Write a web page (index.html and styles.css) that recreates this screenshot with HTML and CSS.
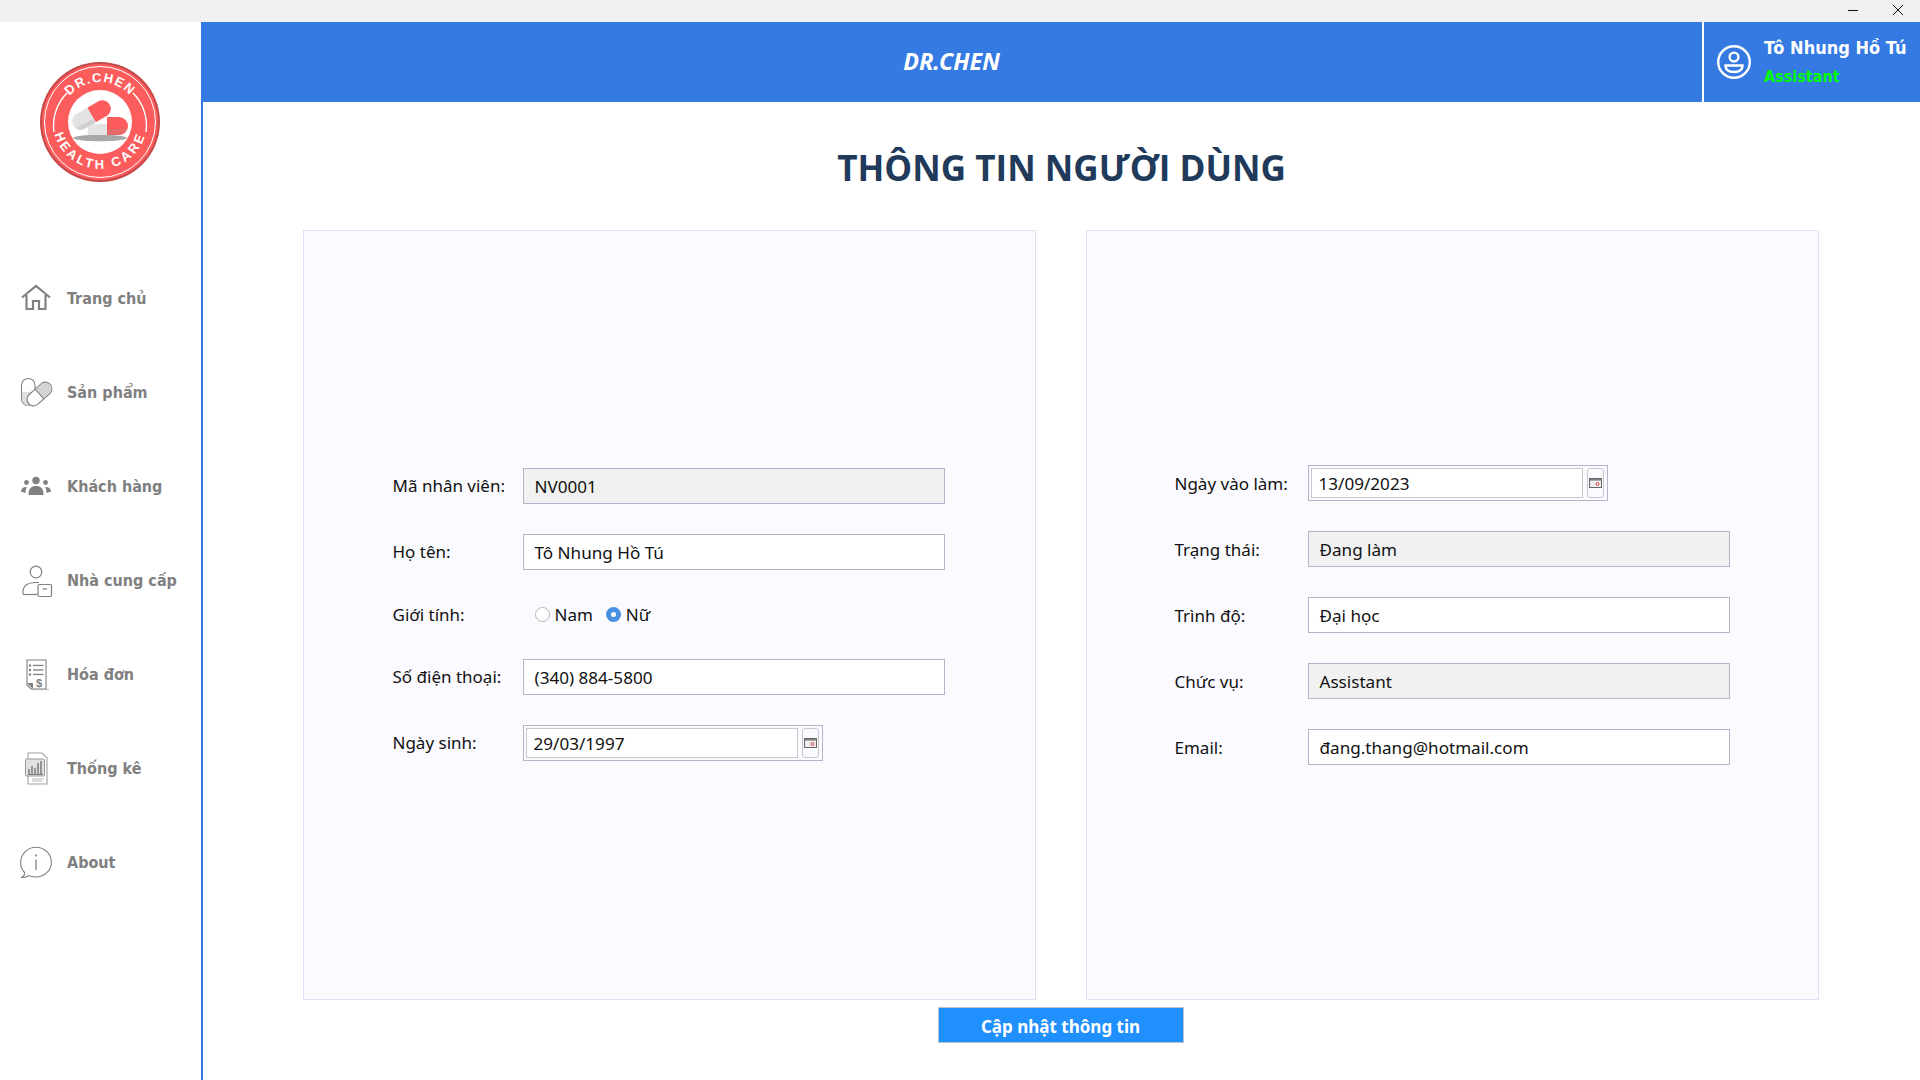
FILE: index.html
```html
<!DOCTYPE html>
<html lang="vi">
<head>
  <meta charset="UTF-8">
  <title>Thông tin người dùng</title>
  <link rel="stylesheet" href="styles.css">
</head>
<body>
  <div class="titlebar">
    <span class="win-btn win-min"></span>
    <svg class="win-close" width="12" height="12" viewBox="0 0 12 12"><path d="M1 1 L11 11 M11 1 L1 11" stroke="#111" stroke-width="1" fill="none"/></svg>
  </div>

  <div class="app">
    <aside class="sidebar">
      <svg class="logo" width="120" height="120" viewBox="0 0 120 120">
        <defs>
          <path id="arcTop" d="M20 60 A40 40 0 0 1 100 60"/>
          <path id="arcBottom" d="M13 60 A47 47 0 0 0 107 60"/>
        </defs>
        <circle cx="60" cy="60" r="60" fill="#c54848"/>
        <circle cx="60" cy="60" r="58" fill="#fd5c5c"/>
        <circle cx="60" cy="60" r="55.5" fill="none" stroke="#fff" stroke-width="1"/>
        <path d="M27 31 A46 46 0 0 0 14 70" fill="none" stroke="#fff" stroke-width="1.4"/>
        <path d="M93 31 A46 46 0 0 1 106 70" fill="none" stroke="#fff" stroke-width="1.4"/>
        <circle cx="60" cy="60" r="32" fill="#fff"/>
        <text class="logo-text logo-top"><textPath href="#arcTop" startOffset="50%" text-anchor="middle">DR.CHEN</textPath></text>
        <text class="logo-text logo-bottom"><textPath href="#arcBottom" startOffset="50%" text-anchor="middle">HEALTH CARE</textPath></text>
        <ellipse cx="60" cy="76" rx="27" ry="3.2" fill="#a8a8a8"/>
        <path d="M48 62 H67 V73 H48 Z" fill="#e4e4e4"/>
        <path d="M67 55 H79 A9 9 0 0 1 79 73 H67 Z" fill="#fd5c5c"/>
        <path d="M67 67 H87 A9 9 0 0 1 79 73 H67 Z" fill="#e56b6b"/>
        <g transform="rotate(-30 51.5 53)">
          <path d="M51.5 44.5 H64 A8.5 8.5 0 0 1 64 61.5 H51.5 Z" fill="#fd5c5c"/>
          <path d="M51.5 44.5 H39 A8.5 8.5 0 0 0 39 61.5 H51.5 Z" fill="#e2e2e2"/>
          <path d="M31 56 A8.5 8.5 0 0 0 39 61.5 H51.5 V57 H38 Z" fill="#cfcfcf"/>
        </g>
      </svg>

      <nav class="nav">
        <a class="nav-item">
          <svg class="nav-icon" width="36" height="36" viewBox="0 0 36 36"><path d="M4 17.5 L18 6 L32 17.5 M8.5 15 V29 H15 V21 H21 V29 H27.5 V15" fill="none" stroke="#808080" stroke-width="2.2"/></svg>
          <span class="nav-label">Trang chủ</span>
        </a>
        <a class="nav-item">
          <svg class="nav-icon" width="36" height="36" viewBox="0 0 36 36">
            <rect x="3.5" y="4.5" width="13.5" height="27" rx="6.7" fill="#fff" stroke="#808080" stroke-width="1.1"/>
            <path d="M4 18 H17 V25 A6.5 6.5 0 0 1 4 25 Z" fill="#dedede"/>
            <g transform="rotate(-42 21.5 20)">
              <rect x="7" y="13.5" width="29" height="13" rx="6.5" fill="#fff" stroke="#808080" stroke-width="1.1"/>
              <path d="M21.5 14 H29.5 A6 6 0 0 1 29.5 26 H21.5 Z" fill="#d4d4d4"/>
              <path d="M21.5 13.5 V26.5" stroke="#808080" stroke-width="1.1"/>
            </g>
          </svg>
          <span class="nav-label">Sản phẩm</span>
        </a>
        <a class="nav-item">
          <svg class="nav-icon" width="36" height="36" viewBox="0 0 36 36" fill="#808080">
            <circle cx="18" cy="12.5" r="3.7"/>
            <path d="M10.5 27 C10.5 20 13.5 18 18 18 C22.5 18 25.5 20 25.5 27 Z"/>
            <circle cx="8.5" cy="14.5" r="2.4"/>
            <circle cx="27.5" cy="14.5" r="2.4"/>
            <path d="M3 23.5 C3.5 20 5.5 19 8.5 19 C8.8 19 8.9 19.4 8.7 19.7 C7.8 21 7.5 22.3 7.5 25 Z"/>
            <path d="M33 23.5 C32.5 20 30.5 19 27.5 19 C27.2 19 27.1 19.4 27.3 19.7 C28.2 21 28.5 22.3 28.5 25 Z"/>
          </svg>
          <span class="nav-label">Khách hàng</span>
        </a>
        <a class="nav-item">
          <svg class="nav-icon" width="36" height="36" viewBox="0 0 36 36" fill="none" stroke="#808080" stroke-width="1.2">
            <circle cx="18" cy="10" r="5.8"/>
            <path d="M5 32 V30 C5 23.5 10 20.5 18 20.5 H21"/>
            <path d="M5 32.5 H19"/>
            <rect x="20" y="22.5" width="13.5" height="12" rx="1.5"/>
            <path d="M24.5 27 H29"/>
          </svg>
          <span class="nav-label">Nhà cung cấp</span>
        </a>
        <a class="nav-item">
          <svg class="nav-icon" width="36" height="36" viewBox="0 0 36 36">
            <path d="M9 4 H28 V33 H13 L9 29 Z" fill="#fff" stroke="#808080" stroke-width="1.1"/>
            <path d="M9 27 L15 33 V27 Z" fill="#808080"/>
            <path d="M13 33.6 H31" stroke="#b0b0b0"/>
            <g fill="#808080">
              <circle cx="12" cy="9.5" r="1.2"/><circle cx="12" cy="14" r="1.2"/><circle cx="12" cy="18.5" r="1.2"/>
              <rect x="15" y="8.8" width="10.5" height="1.3"/><rect x="15" y="13.3" width="10.5" height="1.3"/><rect x="15" y="17.8" width="10.5" height="1.3"/>
            </g>
            <text class="icon-dollar" x="18" y="31">$</text>
          </svg>
          <span class="nav-label">Hóa đơn</span>
        </a>
        <a class="nav-item">
          <svg class="nav-icon" width="36" height="36" viewBox="0 0 36 36">
            <path d="M10 3 H24 L29 8 V34 H10 Z" fill="#fff" stroke="#a0a0a0" stroke-width="1.1"/>
            <rect x="7.5" y="9" width="19" height="17" rx="1" fill="#e2e2e2" stroke="#9a9a9a"/>
            <path d="M11 24 V19 M14 24 V16 M17 24 V18 M20 24 V13 M23 24 V11" stroke="#808080" stroke-width="1.6"/>
            <path d="M10 24.5 H25" stroke="#808080"/>
            <path d="M14 29 H26 M14 31 H24" stroke="#b5b5b5"/>
          </svg>
          <span class="nav-label">Thống kê</span>
        </a>
        <a class="nav-item">
          <svg class="nav-icon" width="36" height="36" viewBox="0 0 36 36">
            <path d="M3.5 33.5 C6 32 7 30.5 6.6 28.5 C4 26 2.6 22.5 2.6 18.5 C2.6 10.5 9.5 3.2 18 3.2 C26.5 3.2 33.4 10 33.4 18.2 C33.4 26.5 26.5 33 18 33 C14.5 33 12.5 32 10.5 31.8 C8.5 33 6 33.8 3.5 33.5 Z" fill="none" stroke="#808080" stroke-width="1.1"/>
            <path d="M18 15.5 V26" stroke="#808080" stroke-width="1.3"/>
            <circle cx="18" cy="11.5" r="1" fill="#808080"/>
          </svg>
          <span class="nav-label">About</span>
        </a>
      </nav>
    </aside>

    <div class="content">
      <header class="topbar">
        <div class="brand">DR.CHEN</div>
        <div class="user">
          <svg class="user-icon" width="36" height="36" viewBox="0 0 36 36" fill="none" stroke="#fff" stroke-width="2.4">
            <circle cx="18" cy="18" r="15.8"/>
            <circle cx="18" cy="13" r="4.4"/>
            <path d="M9.5 21.5 H26.5 C26.5 26 23 28 18 28 C13 28 9.5 26 9.5 21.5 Z"/>
          </svg>
          <div class="user-text">
            <div class="user-name">Tô Nhung Hồ Tú</div>
            <div class="user-role">Assistant</div>
          </div>
        </div>
      </header>

      <main class="main">
        <h1 class="page-title">THÔNG TIN NGƯỜI DÙNG</h1>

        <div class="panels">
          <section class="panel panel-left">
            <div class="row">
              <label class="lbl">Mã nhân viên:</label>
              <div class="field disabled">NV0001</div>
            </div>
            <div class="row">
              <label class="lbl">Họ tên:</label>
              <div class="field">Tô Nhung Hồ Tú</div>
            </div>
            <div class="row row-radio">
              <label class="lbl">Giới tính:</label>
              <div class="radios">
                <span class="radio"></span><span class="radio-text">Nam</span>
                <span class="radio checked"></span><span class="radio-text">Nữ</span>
              </div>
            </div>
            <div class="row">
              <label class="lbl">Số điện thoại:</label>
              <div class="field">(340) 884-5800</div>
            </div>
            <div class="row">
              <label class="lbl">Ngày sinh:</label>
              <div class="date">
                <div class="date-input">29/03/1997</div>
                <div class="date-btn">
                  <svg width="13" height="10" viewBox="0 0 13 10"><rect x=".5" y=".5" width="12" height="9" fill="#eee" stroke="#666"/><rect x="1" y="1" width="11" height="1.6" fill="#8a7f7f"/><circle cx="8.5" cy="6" r="1.5" fill="none" stroke="#e0403f"/></svg>
                </div>
              </div>
            </div>
          </section>

          <section class="panel panel-right">
            <div class="row">
              <label class="lbl">Ngày vào làm:</label>
              <div class="date">
                <div class="date-input">13/09/2023</div>
                <div class="date-btn">
                  <svg width="13" height="10" viewBox="0 0 13 10"><rect x=".5" y=".5" width="12" height="9" fill="#eee" stroke="#666"/><rect x="1" y="1" width="11" height="1.6" fill="#8a7f7f"/><circle cx="8.5" cy="6" r="1.5" fill="none" stroke="#e0403f"/></svg>
                </div>
              </div>
            </div>
            <div class="row">
              <label class="lbl">Trạng thái:</label>
              <div class="field disabled">Đang làm</div>
            </div>
            <div class="row">
              <label class="lbl">Trình độ:</label>
              <div class="field">Đại học</div>
            </div>
            <div class="row">
              <label class="lbl">Chức vụ:</label>
              <div class="field disabled">Assistant</div>
            </div>
            <div class="row">
              <label class="lbl">Email:</label>
              <div class="field">đang.thang@hotmail.com</div>
            </div>
          </section>
        </div>

        <button class="btn-update" type="button">Cập nhật thông tin</button>
      </main>
    </div>
  </div>
</body>
</html>
```

FILE: styles.css
```css
html, body {
  margin: 0;
  height: 100%;
  overflow: hidden;
  background: #fff;
  font-family: "Noto Sans", "Open Sans", sans-serif;
}

/* thanh cua so */
.titlebar {
  height: 22px;
  background: #f0f0f0;
  display: flex;
  align-items: center;
  justify-content: flex-end;
}

.win-btn.win-min {
  width: 10px;
  height: 1px;
  background: #111;
  margin-right: 34px;
  margin-top: -2px;
}

.win-close {
  margin-right: 16px;
  margin-top: -2px;
}

.app {
  display: flex;
  height: 1058px;
}

/* sidebar */
.sidebar {
  width: 201px;
  flex: none;
  background: #fff;
  border-right: 2px solid #357ae3;
  display: flex;
  flex-direction: column;
  align-items: flex-start;
}

.logo {
  margin: 40px 0 0 40px;
}

.logo-text {
  font-family: "Liberation Sans", sans-serif;
  font-weight: 700;
  font-size: 13px;
  fill: #fff;
}

.logo-top {
  letter-spacing: 1.4px;
}

.logo-bottom {
  letter-spacing: 2.8px;
}

.nav {
  margin-top: 69px;
  display: flex;
  flex-direction: column;
  width: 100%;
}

.nav-item {
  height: 94px;
  display: flex;
  align-items: center;
  padding-left: 18px;
  gap: 13px;
  color: #808080;
  font-family: "DejaVu Sans", sans-serif;
  font-stretch: condensed;
  font-weight: 700;
  font-size: 16px;
}

.nav-label {
  padding-top: 1px;
}

.icon-dollar {
  font-family: "Liberation Sans", sans-serif;
  font-weight: 700;
  font-size: 11px;
  fill: #808080;
}

/* header */
.content {
  flex: 1;
  display: flex;
  flex-direction: column;
  min-width: 0;
}

.topbar {
  height: 80px;
  margin-left: -2px;
  background: #357ae3;
  display: flex;
  color: #fff;
}

.brand {
  flex: 1;
  display: flex;
  align-items: center;
  justify-content: center;
  padding-bottom: 2px;
  font-style: italic;
  font-weight: 700;
  font-size: 23.3px;
}

.user {
  width: 218px;
  border-left: 2px solid #fff;
  display: flex;
  align-items: center;
  box-sizing: border-box;
  padding-left: 12px;
  gap: 12px;
}

.user-text {
  display: flex;
  flex-direction: column;
  gap: 7px;
  font-family: "DejaVu Sans", sans-serif;
  font-stretch: condensed;
  font-weight: 700;
}

.user-name {
  font-size: 18px;
  line-height: 22px;
}

.user-role {
  font-size: 16px;
  line-height: 22px;
  color: #00ff00;
}

/* noi dung */
.main {
  flex: 1;
  display: flex;
  flex-direction: column;
  align-items: center;
}

.page-title {
  margin: 0;
  height: 128px;
  box-sizing: border-box;
  padding-top: 36px;
  font-family: "Open Sans", sans-serif;
  font-size: 35.1px;
  line-height: 58px;
  font-weight: 700;
  color: #1f3a5a;
}

.panels {
  display: flex;
  gap: 50px;
  margin-left: -2px;
}

.panel {
  width: 733px;
  height: 770px;
  box-sizing: border-box;
  background: #fafaff;
  border: 1px solid #e0dff5;
  display: flex;
  flex-direction: column;
  justify-content: center;
  gap: 30px;
}

.panel-left {
  padding-left: 89px;
  padding-bottom: 2px;
}

.panel-right {
  padding-left: 88px;
}

.row {
  display: flex;
  align-items: center;
  min-height: 36px;
}

.row-radio {
  min-height: 29px;
}

.lbl {
  width: 130px;
  flex: none;
  font-size: 17px;
  color: #111;
}

.panel-right .lbl {
  width: 133px;
}

.field {
  width: 422px;
  height: 36px;
  box-sizing: border-box;
  border: 1px solid #b4b4cc;
  background: #fff;
  padding: 1px 11px 0;
  display: flex;
  align-items: center;
  font-size: 17.1px;
  color: #111;
}

.field.disabled {
  background: #f1f1f1;
}

.date {
  width: 300px;
  height: 36px;
  box-sizing: border-box;
  border: 1px solid #b4b4cc;
  padding: 2px 3px 2px 2px;
  display: flex;
  gap: 4px;
}

.date-input {
  flex: 1;
  box-sizing: border-box;
  border: 1px solid #c8c8d2;
  background: #fff;
  padding: 1px 7px 0;
  display: flex;
  align-items: center;
  font-size: 17.1px;
  color: #111;
}

.date-btn {
  width: 17px;
  box-sizing: border-box;
  border: 1px solid #c8c8d2;
  border-radius: 3px;
  background: #fafaff;
  display: flex;
  align-items: center;
  justify-content: center;
}

.radios {
  display: flex;
  align-items: center;
  padding-left: 12px;
  font-size: 17px;
  color: #111;
}

.radio {
  width: 15px;
  height: 15px;
  box-sizing: border-box;
  border: 1px solid #b5b5b5;
  border-radius: 50%;
  background: #fff;
  margin-right: 5px;
}

.radio.checked {
  border: 5px solid #4a90e2;
}

.radio-text {
  margin-right: 13px;
}

.btn-update {
  width: 246px;
  height: 36px;
  margin: 7px 0 0 -2px;
  box-sizing: border-box;
  background: #2090ff;
  border: 1px solid #b8c4d0;
  color: #fff;
  font-family: "Noto Sans", sans-serif;
  font-weight: 700;
  font-size: 17px;
  padding: 2px 0 0;
}
```
